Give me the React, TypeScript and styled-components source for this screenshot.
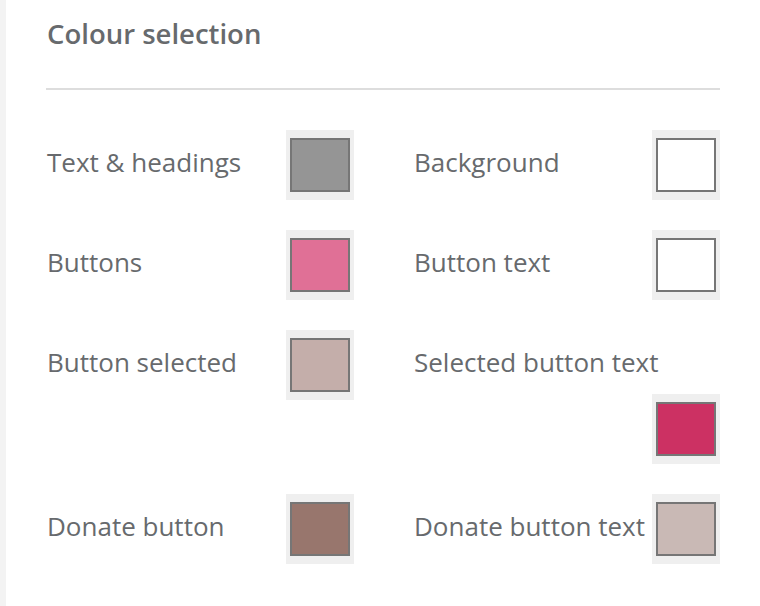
import React from 'react';
import styled, { createGlobalStyle } from 'styled-components';

const GlobalStyle = createGlobalStyle`
  html, body {
    margin: 0;
    padding: 0;
    background: #fff;
    font-family: "Open Sans", "Noto Sans", sans-serif;
  }
`;

const Page = styled.div`
  display: flex;
  min-height: 606px;
`;

const SideStrip = styled.div`
  width: 6px;
  flex-shrink: 0;
  background: #f3f3f3;
`;

const Panel = styled.section`
  width: 674px;
  padding-left: 40px;
`;

const Title = styled.h2`
  margin: 0;
  padding: 15px 0 0 1px;
  height: 88px;
  box-sizing: border-box;
  font-size: 27.5px;
  font-weight: 600;
  line-height: 38px;
  color: #676a6d;
`;

const Rule = styled.hr`
  margin: 0;
  border: none;
  height: 2px;
  background: #dddddd;
`;

const Grid = styled.div`
  display: grid;
  grid-template-columns: 308px 307px;
  column-gap: 59px;
  row-gap: 30px;
  padding-top: 40px;
`;

const Field = styled.div`
  display: flex;
  flex-wrap: wrap;
  align-items: flex-start;
`;

const Label = styled.span`
  padding-left: 1px;
  font-size: 26px;
  line-height: 64px;
  color: #676a6d;
  white-space: nowrap;
`;

const Swatch = styled.div`
  margin-left: auto;
  width: 68px;
  height: 70px;
  box-sizing: border-box;
  padding: 8px 4px;
  background: #efefef;
`;

const Chip = styled.div<{ $colour: string }>`
  width: 60px;
  height: 54px;
  box-sizing: border-box;
  border: 2px solid #767676;
  background: ${p => p.$colour};
`;

const fields = [
  { label: 'Text & headings', colour: '#959595' },
  { label: 'Background', colour: '#ffffff' },
  { label: 'Buttons', colour: '#e07096' },
  { label: 'Button text', colour: '#ffffff' },
  { label: 'Button selected', colour: '#c4aeaa' },
  { label: 'Selected button text', colour: '#cc3163' },
  { label: 'Donate button', colour: '#98766d' },
  { label: 'Donate button text', colour: '#c9b9b5' },
];

const App = () => {
  return <>
    <GlobalStyle />
    <Page>
      <SideStrip />
      <Panel>
        <Title>Colour selection</Title>
        <Rule />
        <Grid>
          {fields.map(f => (
            <Field key={f.label}>
              <Label>{f.label}</Label>
              <Swatch>
                <Chip $colour={f.colour} />
              </Swatch>
            </Field>
          ))}
        </Grid>
      </Panel>
    </Page>
  </>
}

export default App;
